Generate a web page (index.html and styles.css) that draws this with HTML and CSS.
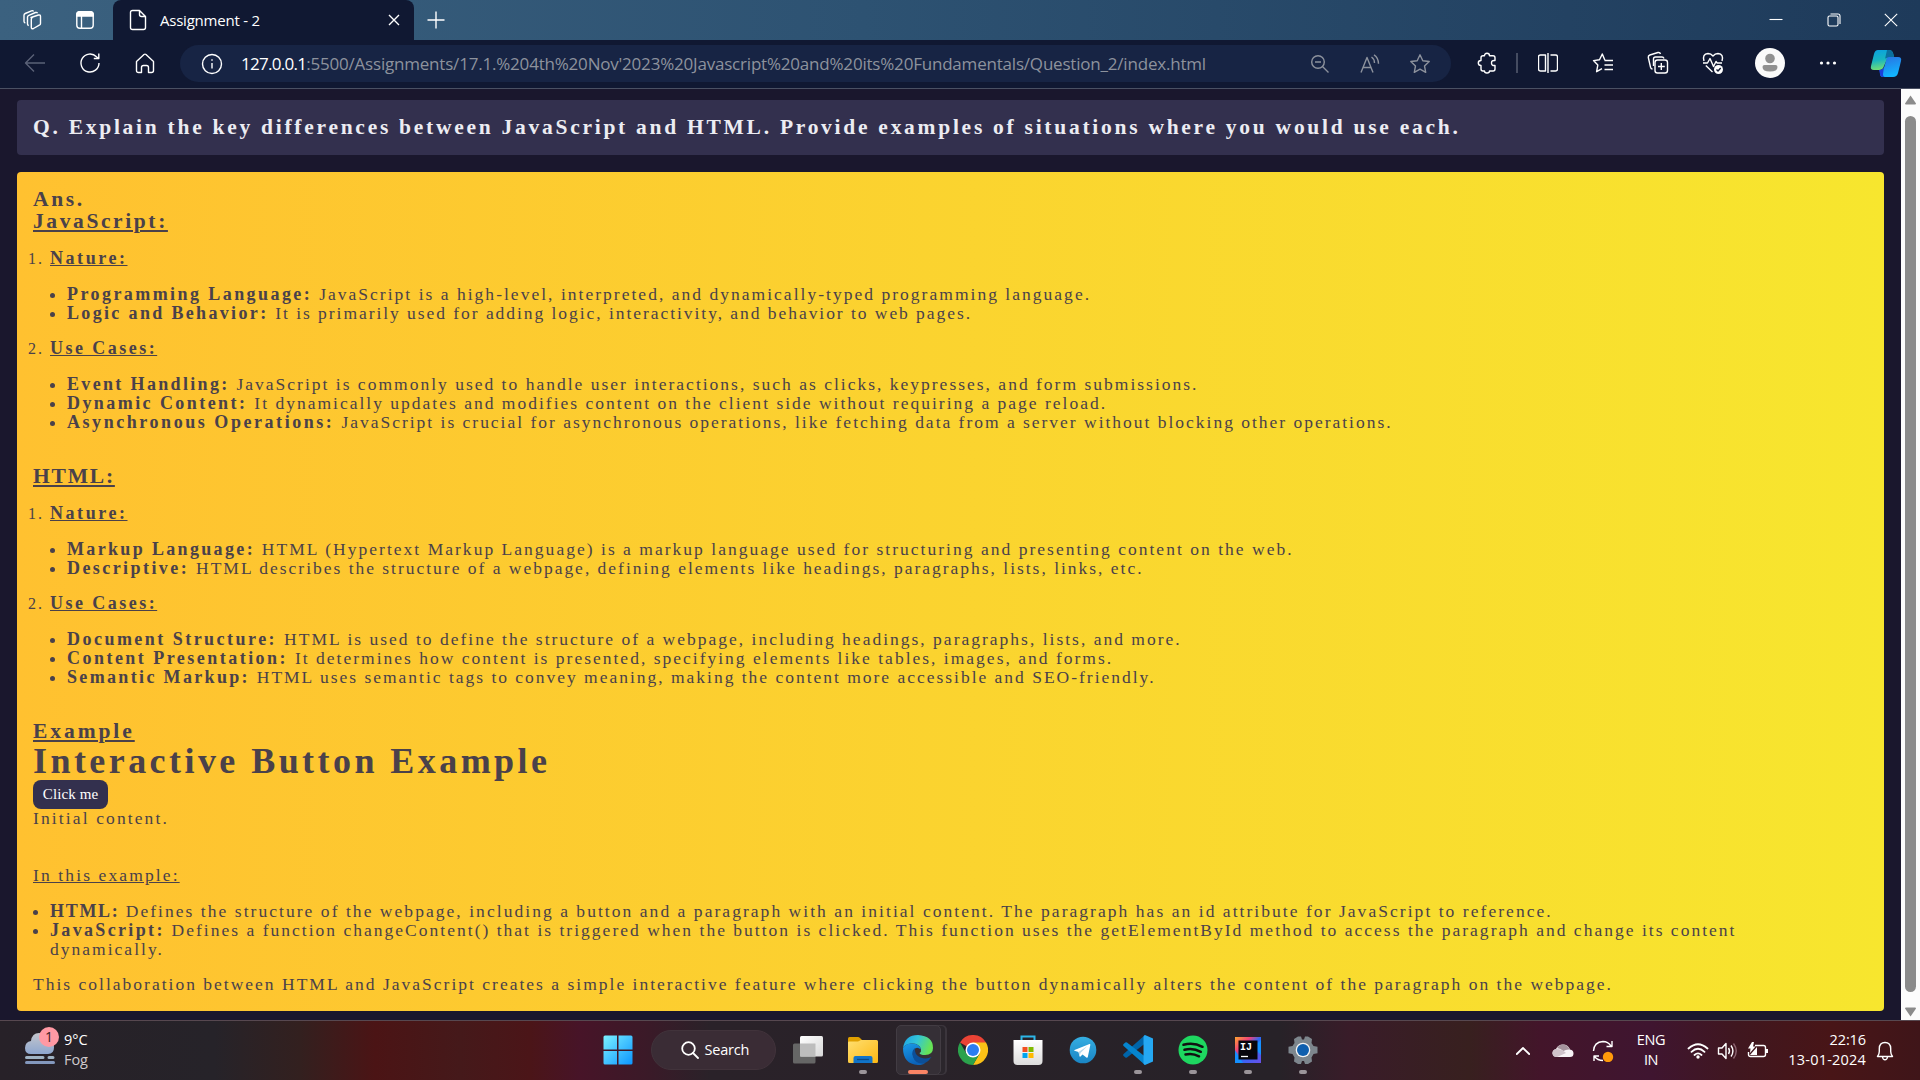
FILE: index.html
```html
<!DOCTYPE html>
<html lang="en">
<head>
<meta charset="utf-8">
<title>Assignment - 2</title>
<link rel="stylesheet" href="styles.css">
</head>
<body>
<header class="titlebar">
  <div class="tb-icons">
    <svg class="ic" width="22" height="22" viewBox="0 0 22 22"><path d="M10 8.500 17.500 6q2-.4 2 1.500v7q0 1.200-1.200 1.700L12.500 19.500q-2.200.8-2.200-1.200V10q0-1 1-1.500z"/><path d="M7.800 16.500Q6.500 16.300 6.500 15V8q0-1.200 1.300-1.700L14.500 3.500q1.500-.5 2 .8M4.300 14Q3 13.600 3 12.300V6.200Q3 5 4.200 4.500L10.500 1.800q1.500-.5 2 .7"/></svg>
    <svg class="ic" width="20" height="20" viewBox="0 0 20 20"><rect x="1.800" y="1.800" width="16.400" height="16.400" rx="3"/><path d="M1.800 4.800Q1.800 1.800 4.800 1.800H15.200Q18.200 1.800 18.200 4.800V6H1.800z" fill="#fff"/><path d="M6.500 6v12"/></svg>
  </div>
  <div class="tab">
    <svg class="ic" width="18" height="22" viewBox="0 0 18 22"><path d="M3.500 1.500h7l6 6v11q0 2-2 2h-11q-2 0-2-2v-15q0-2 2-2zM10.500 1.500v4q0 2 2 2h4"/></svg>
    <span class="tab-title">Assignment - 2</span>
    <svg class="ic" width="12" height="12" viewBox="0 0 12 12"><path d="M1 1l10 10M11 1 1 11"/></svg>
  </div>
  <svg class="ic plus" width="18" height="18" viewBox="0 0 18 18"><path d="M9 .5v17M.5 9h17"/></svg>
  <div class="win">
    <svg class="ic thin" width="14" height="14" viewBox="0 0 14 14"><path d="M.5 6.500h13"/></svg>
    <svg class="ic thin" width="14" height="14" viewBox="0 0 14 14"><rect x="1" y="3" width="10" height="10" rx="1.500"/><path d="M3.500 1H11q2 0 2 2v8"/></svg>
    <svg class="ic thin" width="14" height="14" viewBox="0 0 14 14"><path d="M.8.800l12.400 12.400M13.200.800.800 13.200"/></svg>
  </div>
</header>

<nav class="toolbar">
  <div class="cell nav"><svg class="ic dim" width="22" height="20" viewBox="0 0 22 20"><path d="M10 1.500 1.500 10l8.500 8.500M1.500 10H21"/></svg></div>
  <div class="cell nav"><svg class="ic" width="22" height="22" viewBox="0 0 22 22"><path d="M20 11A9 9 0 1 1 17.500 4.800L19.500 6.500M19.800 1.500v5h-5"/></svg></div>
  <div class="cell nav"><svg class="ic" width="20" height="22" viewBox="0 0 20 22"><path d="M1.500 9.500 9 2.500q1-.8 2 0l7.500 7v9q0 2-2 2h-3v-5q0-2-2-2h-3q-2 0-2 2v5h-3q-2 0-2-2z"/></svg></div>
  <div class="pill">
    <svg class="ic" width="22" height="22" viewBox="0 0 22 22"><circle cx="11" cy="11" r="9.500"/><path d="M11 10v5.500M11 6.200v1.600"/></svg>
    <p class="url"><span class="host">127.0.0.1</span><span>:5500/Assignments/17.1.%204th%20Nov'2023%20Javascript%20and%20its%20Fundamentals/Question_2/index.html</span></p>
    <div class="cell tool"><svg class="ic grey" width="20" height="20" viewBox="0 0 20 20"><circle cx="8" cy="8" r="6.300"/><path d="M5 8h6M12.500 12.500 18.500 18.500"/></svg></div>
    <div class="cell tool"><svg class="ic grey" width="20" height="20" viewBox="0 0 20 20"><path d="M1 18.500 7 3.500l6 15M3.200 13.500h7.600M11.500 3q3 2 3 6M14 .8q4.500 3 4.500 9"/></svg></div>
    <div class="cell tool"><svg class="ic grey" width="22" height="22" viewBox="0 0 22 22"><path d="M11 1.800l2.800 5.900 6.400.8-4.700 4.400 1.200 6.400L11 16.200l-5.700 3.100 1.200-6.400L1.800 8.500l6.400-.8z"/></svg></div>
  </div>
  <div class="cell ext"><svg class="ic" width="20" height="22" viewBox="0 0 20 22"><path d="M6 3.800h1.500Q7.500 1.300 10 1.300T12.500 3.800H16q2 0 2 2V8.500Q14.500 8 14.500 11t3.500 2.500V17q0 2-2 2h-3.500Q12.500 21 10 21t-2.500-2H6q-2 0-2-2v-3.500Q1.300 13.500 1.300 11T4 8.500V5.800q0-2 2-2z"/></svg></div>
  <i class="divider"></i>
  <div class="cell side"><svg class="ic" width="20" height="22" viewBox="0 0 20 22"><path d="M7.500 3H2.500q-2 0-2 2v12q0 2 2 2h5zM12.500 3h5q2 0 2 2v12q0 2-2 2h-5M10 1v20"/></svg></div>
  <div class="cell side"><svg class="ic" width="22" height="22" viewBox="0 0 22 22"><path d="M12.800 8 10.300 2 7.500 7.800l-6 .8 4.300 4.500-1.200 6.600 5.400-3M12.500 8.500H21M12.500 13H21M12.500 17.500H21"/></svg></div>
  <div class="cell side"><svg class="ic" width="22" height="24" viewBox="0 0 22 24"><rect x="8" y="9" width="12.500" height="13" rx="2.500"/><path d="M14.300 12v7M11 15.500h6.800M5.500 18Q4 18 3.500 16.200L1.300 6.500Q1 4.600 2.800 4L11 1.500q2-.4 2.500 1.500M6.500 15V8q0-2 2-2H15q1.500 0 2 1.500"/></svg></div>
  <div class="cell side"><svg class="ic" width="22" height="24" viewBox="0 0 22 24"><path d="M2 10Q0 3 6 2.500q3 0 5 2.500 2-2.500 5-2.500 6 .5 4 7.500M1 12h4.500l2.500-4.500 3.500 8 2.500-5 1.200 1.500H20M3.800 14.500 10.500 21"/><circle cx="16.500" cy="18.500" r="4.500" fill="#fff" stroke="none"/><path d="M14.500 18.500l1.500 1.500 2.700-3" stroke="#101832"/></svg></div>
  <div class="cell menu"><svg width="30" height="30" viewBox="0 0 30 30"><circle cx="15" cy="15" r="15" fill="#fafafa"/><circle cx="15" cy="10.500" r="4.800" fill="#919191"/><path d="M7.500 19q0-2 2-2h11q2 0 2 2 0 4.500-7.500 4.500T7.500 19z" fill="#919191"/></svg></div>
  <div class="cell menu"><svg width="18" height="4" viewBox="0 0 18 4" fill="#fff"><circle cx="2.500" cy="2" r="1.600"/><circle cx="9" cy="2" r="1.600"/><circle cx="15.500" cy="2" r="1.600"/></svg></div>
  <div class="cell menu"><svg width="32" height="28" viewBox="0 0 32 28"><defs><linearGradient id="c1" x2=".2" y2="1"><stop stop-color="#0aa0e0"/><stop offset=".55" stop-color="#18b5c0"/><stop offset="1" stop-color="#6fdc78"/></linearGradient><linearGradient id="c2" y2="1" x2=".3"><stop stop-color="#2a6fe0"/><stop offset="1" stop-color="#12b4ff"/></linearGradient></defs><path d="M8 1h11q3 0 4 3l1 4h-6l-4 9q-1 4-5 4H4q-4 0-3-4L4 5q1-4 4-4z" fill="url(#c1)"/><path d="M17 1h2q3 0 4 3l1.500 5H17q-2 0-2 1z" fill="#0b6f9e"/><path d="M19 8h9q4 0 3 4l-3 12q-1 4-5 4H13q-3 0-3-4l.5-3q3 0 4-4l2-7q.5-2 2.500-2z" fill="url(#c2)"/><path d="M9 21q4 0 5-3l-1 7q0 3 2 3h-2q-3 0-3-3z" fill="#1b3fd8"/></svg></div>
</nav>

<div class="viewport">
<main>
  <section class="question"><h2 class="q">Q. Explain the key differences between JavaScript and HTML. Provide examples of situations where you would use each.</h2></section>
  <section class="answer">
    <h2>Ans.</h2>
    <h2 class="u">JavaScript:</h2>
    <ol>
      <li><b class="u wide">Nature:</b>
        <ul><li><b class="snug">Programming Language: </b><span class="loose">JavaScript is a high-level, interpreted, and dynamically-typed programming language.</span></li>
        <li><b class="tight">Logic and Behavior: </b><span class="tight">It is primarily used for adding logic, interactivity, and behavior to web pages.</span></li></ul></li>
      <li><b class="u">Use Cases:</b>
        <ul><li><b class="tight">Event Handling: </b>JavaScript is commonly used to handle user interactions, such as clicks, keypresses, and form submissions.</li>
        <li><b class="snug">Dynamic Content: </b>It dynamically updates and modifies content on the client side without requiring a page reload.</li>
        <li><b class="wide">Asynchronous Operations: </b><span class="snug">JavaScript is crucial for asynchronous operations, like fetching data from a server without blocking other operations.</span></li></ul></li>
    </ol>
    <h2 class="u next short">HTML:</h2>
    <ol>
      <li><b class="u wide">Nature:</b>
        <ul><li><b class="tight">Markup Language: </b><span class="loose">HTML (Hypertext Markup Language) is a markup language used for structuring and presenting content on the web.</span></li>
        <li><b class="snug">Descriptive: </b><span class="snug">HTML describes the structure of a webpage, defining elements like headings, paragraphs, lists, links, etc.</span></li></ul></li>
      <li><b class="u">Use Cases:</b>
        <ul><li><b>Document Structure: </b>HTML is used to define the structure of a webpage, including headings, paragraphs, lists, and more.</li>
        <li><b>Content Presentation: </b>It determines how content is presented, specifying elements like tables, images, and forms.</li>
        <li><b class="tight">Semantic Markup: </b><span class="snug">HTML uses semantic tags to convey meaning, making the content more accessible and SEO-friendly.</span></li></ul></li>
    </ol>
    <h2 class="u next example">Example</h2>
    <h1>Interactive Button Example</h1>
    <button class="btn">Click me</button>
    <p class="airy">Initial content.</p>
    <p class="u airy intro">In this example:</p>
    <ul>
      <li><b class="short">HTML: </b><span class="looser">Defines the structure of the webpage, including a button and a paragraph with an initial content. The paragraph has an id attribute for JavaScript to reference.</span></li>
      <li><b class="tight">JavaScript: </b><span class="even">Defines a function changeContent() that is triggered when the button is clicked. This function uses the getElementById method to access the paragraph and change its content<br>dynamically.</span></li>
    </ul>
    <p>This collaboration between HTML and JavaScript creates a simple interactive feature where clicking the button dynamically alters the content of the paragraph on the webpage.</p>
  </section>
</main>
<aside class="scroll">
  <svg width="11" height="10" viewBox="0 0 11 10"><path d="M5.500.5 11 8.500q0 1-1 1H1q-1 0-1-1z" fill="#8b8b8b"/></svg>
  <i class="thumb"></i>
  <svg width="11" height="10" viewBox="0 0 11 10"><path d="M5.500 9.500 11 1.500q0-1-1-1H1q-1 0-1 1z" fill="#8b8b8b"/></svg>
</aside>
</div>

<footer class="taskbar">
  <div class="weather">
    <svg width="36" height="38" viewBox="0 0 36 38"><defs><linearGradient id="w" y2="1" x2="0"><stop stop-color="#c3c6cc"/><stop offset="1" stop-color="#8ea6cf"/></linearGradient></defs><path d="M7 27q-6 0-6-6t6-7q1-8 8-8 8 0 9 8 6 0 6 6.500T24 27z" fill="url(#w)"/><path d="M2.500 30.500H19M25 30.500h4" stroke="#9fb3c4" stroke-width="3" stroke-linecap="round"/><path d="M2.500 35.500H29.500" stroke="#8398bd" stroke-width="3" stroke-linecap="round"/><circle cx="25" cy="10" r="10" fill="#ff99a4"/><text x="25" y="15" class="badge">1</text></svg>
    <div class="lines"><span>9°C</span><span class="soft">Fog</span></div>
  </div>
  <div class="apps">
    <div class="cell app"><svg width="30" height="30" viewBox="0 0 30 30"><defs><linearGradient id="win" gradientUnits="userSpaceOnUse" x1="0" y1="0" x2="30" y2="30"><stop stop-color="#7df3ff"/><stop offset="1" stop-color="#0a93ff"/></linearGradient></defs><path d="M2 .5h12v14H.5V2Q.5.500 2 .5zM15.500.500H28q1.500 0 1.500 1.500v12.500h-14zM.5 16H14v13.500H2Q.5 29.500.500 28zM15.500 16h14v12q0 1.500-1.500 1.500H15.500z" fill="url(#win)"/></svg></div>
    <div class="search"><svg class="ic bold" width="18" height="18" viewBox="0 0 18 18"><circle cx="7.500" cy="7.500" r="6.300"/><path d="M12 12l5 5"/></svg><span>Search</span></div>
    <div class="cell app"><svg width="30" height="28" viewBox="0 0 30 28"><defs><linearGradient id="tv" x2="1" y2="1"><stop stop-color="#fff"/><stop offset="1" stop-color="#d8d8d8"/></linearGradient></defs><rect x="0" y="7.500" width="22.500" height="20" rx="1.500" fill="#666"/><rect x="7" y="0" width="23" height="20.500" rx="1.500" fill="url(#tv)"/><path d="M7 7.500h15.500v13H7z" fill="#bdbdbd"/></svg></div>
    <div class="cell app"><svg width="30" height="28" viewBox="0 0 30 28"><defs><linearGradient id="f" x2="1" y2="1"><stop stop-color="#ffdf70"/><stop offset="1" stop-color="#fcb813"/></linearGradient></defs><path d="M0 8V2.500Q0 1 1.500 1H10q1 0 2 1l2 2v4z" fill="#e0a000"/><path d="M0 6.500q0-1 1-1h9L13 4h15.500Q30 4 30 5.500v20q0 1.500-1.500 1.500h-27Q0 27 0 25.500z" fill="url(#f)"/><path d="M5.500 27v-5q0-2 2-2h15q2 0 2 2v5z" fill="#1174c8"/><path d="M9 23.500h12" stroke="#0a4a85" stroke-width="1.300"/></svg><i class="dot"></i></div>
    <div class="cell app open"><svg width="30" height="30" viewBox="0 0 30 30"><defs><linearGradient id="e1" x2="1" y2=".3"><stop stop-color="#1ba0e6"/><stop offset=".5" stop-color="#33c5d8"/><stop offset="1" stop-color="#66e356"/></linearGradient><linearGradient id="e2" x2=".4" y2="1"><stop stop-color="#1a9be8"/><stop offset="1" stop-color="#0b62b8"/></linearGradient></defs><path d="M0 13Q2 0 15 0q15 1 15 13 0 7-8 7-5 0-5.500-2 2-1 1.500-4Q16 8 8 8.500 2 9 0 13z" fill="url(#e1)"/><path d="M0 13Q3 8 9 8.500q8 .5 9 6-5-4-7.500 1Q8 22 14 26q4 3 8 2-2 2-7 2Q0 29 0 13z" fill="url(#e2)"/><path d="M12 13q-4 3-2 9 3 8 12 6 4-2 6.500-6-5 2.500-11 .5-6.500-3-5.500-9.500z" fill="#0c4f98"/></svg><i class="dot active"></i></div>
    <div class="cell app"><svg width="30" height="30" viewBox="0 0 30 30"><path d="M15 15 2 7.500A15 15 0 0 1 28 7.500z" fill="#ea4335"/><path d="M28 7.500A15 15 0 0 1 15 30l6.500-11.200L15 7.500z" fill="#fbc116"/><path d="M15 30A15 15 0 0 1 2 7.500l6.500 11.300 13 0z" fill="#2ba24c"/><circle cx="15" cy="15" r="7.500" fill="#fff"/><circle cx="15" cy="15" r="6" fill="#2c7df0"/></svg></div>
    <div class="cell app"><svg width="30" height="30" viewBox="0 0 30 30"><defs><linearGradient id="st" y2="1" x2="0"><stop stop-color="#fff"/><stop offset="1" stop-color="#dcdcdc"/></linearGradient></defs><path d="M8.500 6.500V1.500h13v5" fill="none" stroke="#2cb6e8" stroke-width="2"/><path d="M.5 5h29v21q0 4-4 4h-21q-4 0-4-4z" fill="url(#st)"/><path d="M9.500 12h5v5h-5z" fill="#f25022"/><path d="M15.500 12h5v5h-5z" fill="#7fba00"/><path d="M9.500 18h5v5h-5z" fill="#00a4ef"/><path d="M15.500 18h5v5h-5z" fill="#ffb900"/></svg></div>
    <div class="cell app"><svg width="28" height="28" viewBox="0 0 28 28"><defs><linearGradient id="tg" y2="1" x2="0"><stop stop-color="#35aee2"/><stop offset="1" stop-color="#1a85c4"/></linearGradient></defs><circle cx="14" cy="14" r="13.300" fill="url(#tg)"/><path d="M5.500 14 20.500 8q1-.3.800 1L18.800 21q-.3 1.200-1.400.5L13.500 18.500l-2 2q-.8.700-1-.4L9.500 16l-4-1.200q-.8-.4 0-.8z" fill="#fff"/><path d="M9.500 16 18.500 10l-7 7-.7 3.500z" fill="#b9d9ec"/></svg></div>
    <div class="cell app"><svg width="30" height="30" viewBox="0 0 30 30"><path d="M22 0v8.500L4 22.500q-.8.700-1.700 0L.600 21q-1-1 0-2z" fill="#0065a9"/><path d="M.6 9 2.300 7.500q.9-.7 1.700 0L22 21.500V30L.6 11q-1-1 0-2z" fill="#0585cf"/><path d="M22 0 30 3.500v23L22 30q-1.500-.5-1.500-2V2q0-1.500 1.500-2z" fill="#25a8f2"/></svg><i class="dot"></i></div>
    <div class="cell app"><svg width="30" height="30" viewBox="0 0 30 30"><circle cx="15" cy="15" r="14.500" fill="#1ed760"/><path d="M5.500 9.800q10-2.800 19 2M6.500 14.800q8.500-2.300 16.300 2M7.500 19.500q7-1.800 13.500 1.800" fill="none" stroke="#111" stroke-width="2.500" stroke-linecap="round"/></svg><i class="dot"></i></div>
    <div class="cell app"><svg width="26" height="26" viewBox="0 0 26 26"><defs><linearGradient id="ij" x2="1" y2="1"><stop stop-color="#ffa62e"/><stop offset=".3" stop-color="#f0417a"/><stop offset=".5" stop-color="#2a6af5"/><stop offset="1" stop-color="#6a4fe8"/></linearGradient></defs><path d="M0 0h26v26H0z" fill="url(#ij)"/><path d="M0 26V13l8 13zM26 3v15l-8-8z" fill="#1690ff"/><path d="M3.500 3.500h19v19h-19z" fill="#08060c"/><text x="5" y="13" class="ij">IJ</text><path d="M6 19.500h7" stroke="#fff" stroke-width="1.300"/></svg><i class="dot"></i></div>
    <div class="cell app"><svg width="30" height="30" viewBox="0 0 30 30"><path d="M11 1.500h2l1 3h2l1-3h3l4 2.500-.5 4L25.500 11l4 .8v6.400l-4 .8-2 3.500.5 4-4 2.500h-3l-1-3h-2l-1 3h-3l-4-2.500.5-4-2-3.500-4-.8v-6.400l4-.8 2-3-.5-4L10 1.500z" fill="#7d868d"/><circle cx="15" cy="15" r="7.300" fill="#f3f3f3"/><circle cx="15" cy="15" r="6" fill="#0f5fae"/></svg><i class="dot"></i></div>
  </div>
  <div class="tray">
    <div class="cell t40"><svg class="ic bold" width="14" height="10" viewBox="0 0 14 10"><path d="M.8 8 7 2l6.200 6"/></svg></div>
    <div class="cell t40"><svg width="22" height="14" viewBox="0 0 22 14"><path d="M5 13q-4 0-4.500-3.500T4 5Q6 .5 11 .5t7 5q3.500.5 3.500 4T18 13z" fill="#f7f2f5"/><path d="M.5 9.500Q.5 5.500 4 5q6 0 10 4l-9 4Q1 13 .5 9.500z" fill="#cfc3ca"/><path d="M5 4Q7 .5 11 .5t7 5q-4-.5-6.500 1.500Q8.500 4.500 5 4z" fill="#a5949d"/></svg></div>
    <div class="cell t40"><svg class="ic" width="22" height="22" viewBox="0 0 22 22"><path d="M1.500 11Q2 2 11 1.500q5 0 8 4.500M20 1v5.500h-5.500M2 21v-5h5M2.500 16.500Q5.500 20.500 11 20.500"/><circle cx="16" cy="17" r="5.200" fill="#ff9a0a" stroke="none"/></svg></div>
    <div class="lines lang"><span>ENG</span><span>IN</span></div>
    <div class="status">
      <svg class="ic bold" width="22" height="16" viewBox="0 0 22 16"><path d="M1.500 5.500q9.500-8.500 19 0M4.500 8.800q6.500-6 13 0M7.500 12q3.500-3.300 7 0"/><circle cx="11" cy="14" r="1.700" fill="#fff" stroke="none"/></svg>
      <svg class="ic" width="22" height="18" viewBox="0 0 22 18"><path d="M1.500 6h3.500l4-4.500v15L5 12H1.500zM11.500 6q2 3 0 6M14 3.500q3.800 5.500 0 11"/><path d="M16.500 1.500q5.500 7.500 0 15" stroke="#8c6470"/></svg>
      <svg class="ic" width="22" height="18" viewBox="0 0 22 18"><path d="M8 3.500h8.500q2 0 2 2v7q0 2-2 2h-13q-2 0-2-2V10"/><path d="M19 7h2v4h-2z" fill="#fff" stroke="none"/><path d="M5 0 1 6.500h2.500L3 11l5.500-6.500H6L7 0z" fill="#fff" stroke="none"/><path d="M3 13l7-8v8z" fill="#fff" stroke="none"/></svg>
    </div>
    <div class="lines clock"><span>22:16</span><span class="date">13-01-2024</span></div>
    <svg class="ic bell" width="18" height="20" viewBox="0 0 18 20"><path d="M1.500 15.500q1.800-2.500 1.800-5V7.500Q3.500 1.500 9 1.500t5.700 6v3q0 2.500 1.800 5zM6.500 16q.5 2.800 2.500 2.800t2.500-2.800"/></svg>
  </div>
</footer>
</body>
</html>
```
FILE: styles.css
```css
* { box-sizing: border-box; margin: 0; padding: 0; }

body {
  width: 1920px;
  height: 1080px;
  overflow: hidden;
  display: flex;
  flex-direction: column;
  background: #1a172d;
  color: #fff;
  font-family: "Open Sans", "Noto Sans", sans-serif;
  white-space: nowrap;
}

svg { display: block; flex: none; }
.ic { fill: none; stroke: #fff; stroke-width: 1.4; stroke-linejoin: round; }
.ic.thin { stroke-width: 1.1; }
.ic.bold { stroke-width: 1.8; stroke-linecap: round; }
.ic.dim { stroke: #5a6177; }
.ic.grey { stroke: #8d929d; }
.cell { display: flex; align-items: center; justify-content: center; flex: none; }

/* Browser title bar */
.titlebar {
  height: 40px;
  display: flex;
  align-items: center;
  background: linear-gradient(90deg, #3b617f, #2d5272 45%, #1e3a5a);
}
.tb-icons { width: 113px; display: flex; align-items: center; gap: 32px; padding-left: 21px; }
.tab {
  width: 301px;
  height: 40px;
  display: flex;
  align-items: center;
  padding: 0 14px 0 16px;
  background: #101832;
  border-radius: 8px 8px 0 0;
  font-size: 15px;
  letter-spacing: -0.22px;
}
.tab-title { flex: 1; padding: 0 0 1px 13px; line-height: 20px; }
.plus { margin-left: 13px; }
.win { margin-left: auto; display: flex; gap: 43.5px; padding-right: 22px; }

/* Browser toolbar */
.toolbar {
  height: 49px;
  display: flex;
  align-items: center;
  padding: 0 0 2px 7px;
  background: #101832;
  border-bottom: 1px solid #4a5063;
}
.nav { width: 55px; }
.pill {
  width: 1271px;
  height: 37px;
  margin: 1px 0 0 8px;
  padding: 0 6px 0 21px;
  display: flex;
  align-items: center;
  border-radius: 19px;
  background: #172444;
}
.url { flex: 1; padding-left: 18px; font-size: 17px; letter-spacing: -0.2px; color: #8d929d; }
.host { color: #fff; letter-spacing: -0.73px; }
.tool { width: 50px; }
.ext { width: 65px; padding-left: 6px; }
.divider { width: 2px; height: 20px; margin-right: 2px; background: #454c61; }
.side { width: 55px; }
.menu { width: 58px; padding-left: 2px; }

/* Page */
.viewport { height: 931px; display: flex; }
main {
  width: 1901px;
  padding: 11px 17px 0;
  font: 17.5px/19px "Liberation Serif", serif;
  letter-spacing: 2.005px;
}
.question {
  height: 55px;
  padding: 16px;
  border-radius: 4px;
  background: #33304e;
  color: #ececf2;
}
.answer {
  height: 839px;
  margin-top: 17px;
  padding: 16px;
  border-radius: 4px;
  background: linear-gradient(90deg, #ffc130, #f7e62e);
  color: #4a414a;
}
h2 { font-size: 21.5px; line-height: 22px; letter-spacing: 2.6px; }
h2.q { letter-spacing: 2.73px; }
h2.next { margin-top: 33px; }
h2.short { letter-spacing: 1.8px; }
h2.example { letter-spacing: 2.93px; }
h1 { font-size: 36px; line-height: 38px; letter-spacing: 3.44px; }
.u { text-decoration: underline; }
.answer > h2.u, .answer > p.u { width: max-content; }
ol, ul { margin: 16.5px 0 16.5px 17px; }
li > ul { margin-top: 17px; }
ul { list-style: disc; }
ol > li::marker { font-size: 16px; }
b { font-size: 18px; letter-spacing: 2.47px; }
b.wide { letter-spacing: 2.55px; }
b.snug { letter-spacing: 2.43px; }
b.tight { letter-spacing: 2.34px; }
b.short { letter-spacing: 1.7px; }
span.looser { letter-spacing: 2.045px; }
span.loose { letter-spacing: 2.022px; }
span.even { letter-spacing: 2.014px; }
span.snug { letter-spacing: 1.985px; }
span.tight { letter-spacing: 1.95px; }
.airy { letter-spacing: 2.12px; }
.intro { margin-top: 38px; }
.btn {
  display: block;
  width: 75px;
  height: 29px;
  border: 0;
  border-radius: 8px;
  background: #33304e;
  color: #fff;
  font: 15px "Liberation Serif", serif;
  letter-spacing: 0.1px;
}

.scroll {
  width: 19px;
  padding: 6px 4px 3px;
  display: flex;
  flex-direction: column;
  background: #fcfcfc;
}
.thumb { width: 11px; height: 876px; margin: 11px 0 auto; border-radius: 6px; background: #8b8b8b; }

/* Taskbar */
.taskbar {
  height: 60px;
  display: flex;
  border-top: 1px solid #574850;
  background: linear-gradient(90deg, #272128, #262329 215px, #33201f 300px, #4b1415 375px, #45191a 460px, #4b1518 530px, #471428 580px, #3a1a28 650px, #2a2229 710px, #272228 1280px, #391c29 1350px, #38201f 1470px, #43152a 1540px, #3f1530 1650px, #40171f 1740px, #481517 1830px, #3f1519);
  font-size: 14.5px;
  line-height: 20px;
}
.weather { width: 590.5px; display: flex; padding: 6px 0 0 24px; gap: 4px; }
.badge { font-size: 14px; fill: #3c1c22; text-anchor: middle; }
.ij { font: bold 10px "Liberation Mono", monospace; fill: #fff; }
.lines { display: flex; flex-direction: column; padding-top: 9px; }
.weather .lines { padding-top: 3px; letter-spacing: -0.05px; }
.soft { color: #cfcacd; }
.apps { display: flex; align-items: center; padding-bottom: 1px; }
.app { width: 55px; height: 50px; position: relative; }
.search {
  width: 125px;
  height: 40px;
  margin: 0 5px;
  display: flex;
  align-items: center;
  gap: 6px;
  padding-left: 29px;
  border-radius: 20px;
  background: #3a2c35;
  border: 1px solid #41333b;
  letter-spacing: -0.18px;
}
.open { background: #352f36; border: 1px solid #423c43; border-radius: 5px; width: 45px; margin: 0 5px; box-shadow: 5px 0 0 -1px #2b262c, 6px 0 0 #3b353c; }
.dot { position: absolute; left: 50%; bottom: 1px; width: 8px; height: 4px; margin-left: -4px; border-radius: 2px; background: #9b959a; }
.dot.active { bottom: 0; width: 20px; margin-left: -10px; background: #f98465; }
.tray { margin-left: auto; width: 417px; display: flex; align-items: center; }
.t40 { width: 40px; }
.tray .lines { height: 59px; }
.lang { width: 56px; align-items: center; letter-spacing: -0.4px; }
.status { display: flex; align-items: center; gap: 8px; margin-left: 8px; }
.clock { margin-left: auto; align-items: flex-end; letter-spacing: -0.1px; }
.date { letter-spacing: 0.2px; }
.bell { margin: 0 26px 0 10px; }
```
